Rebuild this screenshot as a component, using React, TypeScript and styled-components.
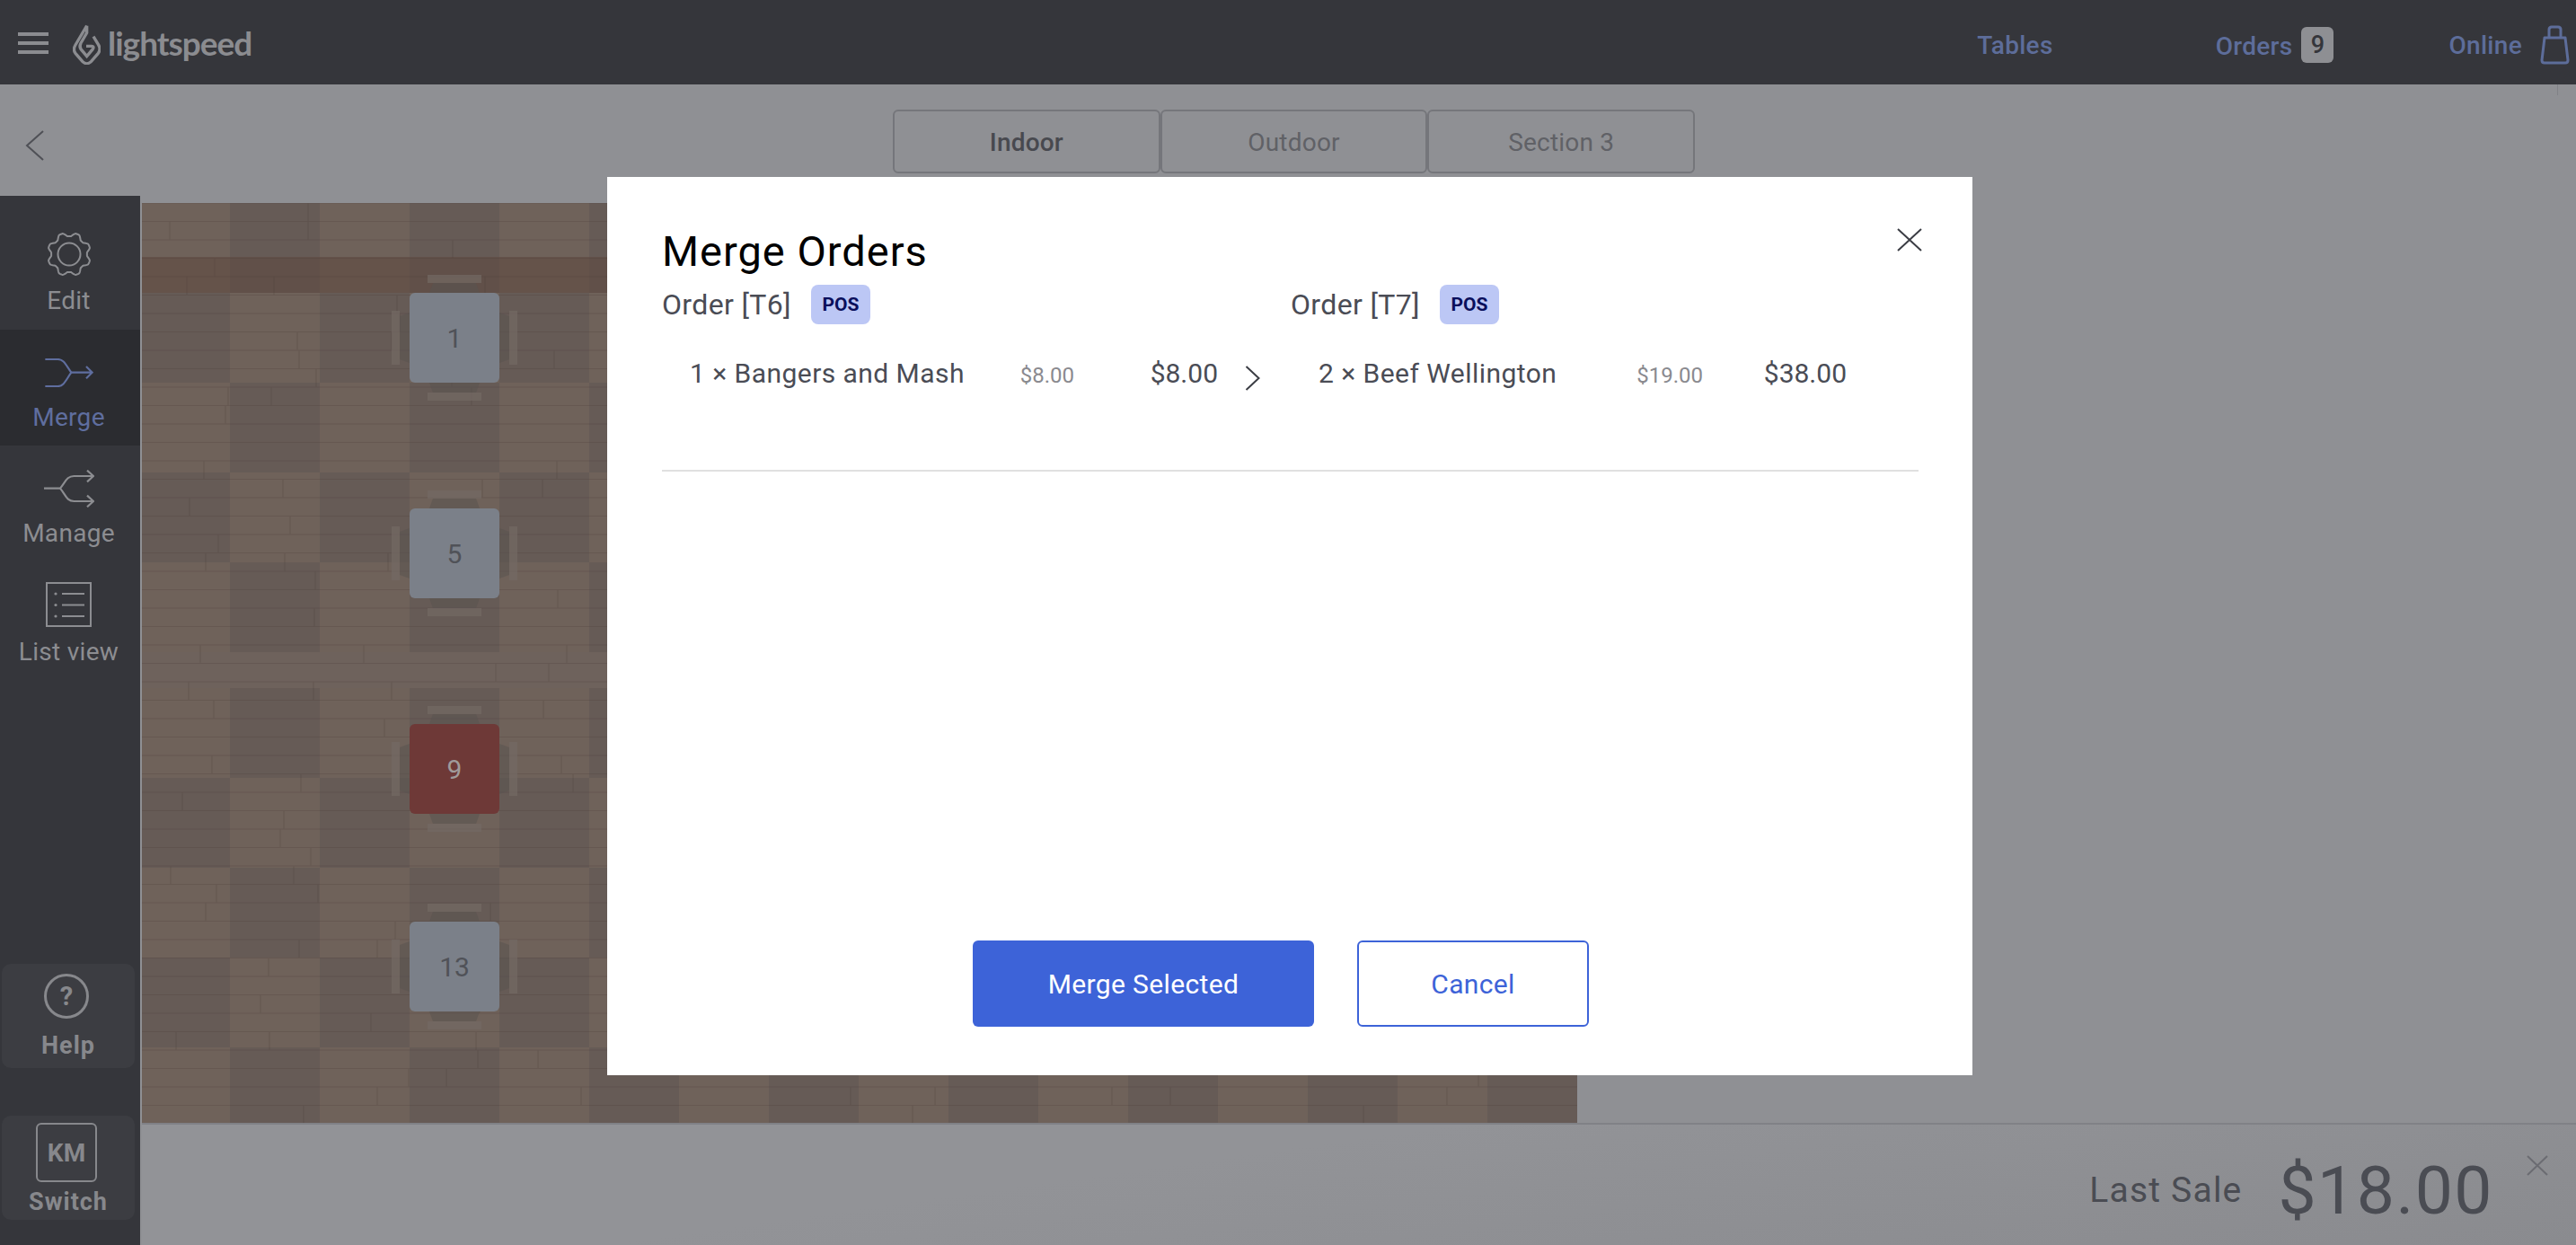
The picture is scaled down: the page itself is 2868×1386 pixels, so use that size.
import React from "react";
import styled, { createGlobalStyle } from "styled-components";

const GlobalStyle = createGlobalStyle`
  html, body {
    margin: 0;
    padding: 0;
    height: 100%;
    overflow: hidden;
    background: #8f9094;
  }
  #root { height: 100%; }
  * { box-sizing: border-box; }
`;

const FONT = `Roboto, "Liberation Sans", sans-serif`;
const COLS = 16;

// floor rows, in px from the top of the floor
const FLOOR_ROWS = [
  { y: 0, h: 100, light: true },
  { y: 100, h: 100, light: false },
  { y: 200, h: 100, light: true },
  { y: 300, h: 100, light: false },
  { y: 400, h: 100, light: true },
  { y: 540, h: 100, light: true },
  { y: 640, h: 100, light: false },
  { y: 740, h: 100, light: true },
  { y: 840, h: 100, light: false },
  { y: 940, h: 84, light: true },
];

const hash = (a: number, b: number) => {
  const v = Math.sin(a * 12.9898 + b * 78.233) * 43758.5453;
  return v - Math.floor(v);
};

const plankPath = () => {
  let d = "";
  for (let y = 0; y <= 1024; y += 20.5) {
    d += `M0 ${y}H1600`;
    for (let c = 0; c < COLS; c++) {
      const r = hash(c, y);
      if (r > 0.6) d += `M${c * 100 - 2 + Math.round(r * 170 - 70)} ${y}v20.5`;
    }
  }
  return d;
};

const FloorArt = () => (
  <FloorSvg viewBox="0 0 1598 1024">
    {FLOOR_ROWS.map((row) =>
      Array.from({ length: COLS }).map((_, c) => (
        <rect
          key={`${row.y}-${c}`}
          x={c * 100 - 2}
          y={row.y}
          width={100}
          height={row.h}
          fill={(c % 2 === 0) === row.light ? "#6f625a" : "#665b56"}
        />
      ))
    )}
    <rect x={0} y={60} width={1598} height={40} fill="#5f4c42" opacity={0.65} />
    <rect x={0} y={500} width={1598} height={40} fill="#6e625c" />
    <path d={plankPath()} stroke="#4a3d39" strokeOpacity={0.25} strokeWidth={1.2} fill="none" />
  </FloorSvg>
);

const gearPath = () => {
  const pts: string[] = [];
  for (let i = 0; i < 128; i++) {
    const t = (i / 128) * Math.PI * 2;
    const wave = Math.max(-0.75, Math.min(0.75, Math.cos(8 * t)));
    const r = 22 - 2.8 * wave;
    pts.push(`${(25 + r * Math.sin(t)).toFixed(2)} ${(25 - r * Math.cos(t)).toFixed(2)}`);
  }
  return `M${pts.join("L")}Z`;
};

const GearIcon = () => (
  <svg width="50" height="50" viewBox="0 0 50 50" fill="none" stroke="#8c8d91" strokeWidth="2">
    <path d={gearPath()} strokeLinejoin="round" />
    <circle cx="25" cy="25" r="12.5" />
  </svg>
);

const MergeIcon = () => (
  <svg width="54" height="32" viewBox="0 0 160 96" fill="none" stroke="#5f6e9f" strokeWidth="6.5">
    <path d="M0 3H42C62 3 68 20 87 47C68 74 62 93 42 93H0" />
    <path d="M87 47H156M137 27L157 47L137 67" />
  </svg>
);

const ManageIcon = () => (
  <svg width="56" height="42" viewBox="0 0 168 126" fill="none" stroke="#8c8d91" strokeWidth="6.5">
    <path d="M0 62H54C72 40 76 21 100 21H164M144 2L165 21L144 40" />
    <path d="M54 62C72 84 76 105 100 105H164M144 86L165 105L144 124" />
  </svg>
);

const ListIcon = () => (
  <svg width="51" height="50" viewBox="0 0 51 50" fill="none" stroke="#8c8d91" strokeWidth="2">
    <rect x="1" y="1" width="49" height="48" />
    <path d="M18 13H43M18 25.5H43M18 38H43" />
    <circle cx="11" cy="13" r="1.6" fill="#8c8d91" stroke="none" />
    <circle cx="11" cy="25.5" r="1.6" fill="#8c8d91" stroke="none" />
    <circle cx="11" cy="38" r="1.6" fill="#8c8d91" stroke="none" />
  </svg>
);

const LogoMark = () => (
  <svg width="31" height="46" viewBox="0 0 91 138" fill="none" stroke="#8b8c90" strokeWidth="10">
    <path d="M46 8L8 72C2 82 2 92 8 100L32 128C40 136 52 136 60 128L84 100C90 92 90 80 84 70L68 44" />
    <path d="M46 8V32L26 66C22 74 22 80 26 86L46 110L66 86C70 80 68 76 62 76H44" />
  </svg>
);

const BagIcon = () => (
  <svg width="33" height="44" viewBox="0 0 33 44" fill="none" stroke="#5d6d9a" strokeWidth="3">
    <path d="M5 14H28L31 39Q31 42 28 42H5Q2 42 2 39Z" strokeLinejoin="round" />
    <path d="M10 14V5Q10 2 13 2H20Q23 2 23 5V14" />
  </svg>
);

const Chair = ({ side }: { side: "top" | "bottom" | "left" | "right" }) => (
  <ChairBox $side={side}>
    <svg width="60" height="20" viewBox="0 0 60 20">
      <rect x="0" y="0" width="60" height="9" fill="#746a64" opacity="0.7" />
      <path d="M6 9H54L58 20H2Z" fill="#5a5350" opacity="0.55" />
    </svg>
  </ChairBox>
);

const tables = [
  { n: "1", y: 100 },
  { n: "5", y: 340 },
  { n: "9", y: 580, busy: true },
  { n: "13", y: 800 },
];

const OrderColumn = ({
  title,
  qty,
  unit,
  total,
  arrow,
}: {
  title: string;
  qty: string;
  unit: string;
  total: string;
  arrow?: boolean;
}) => (
  <div>
    <OrderHead>
      <OrderTitle>{title}</OrderTitle>
      <PosBadge>POS</PosBadge>
    </OrderHead>
    <OrderRow>
      <ItemName>{qty}</ItemName>
      <UnitPrice>{unit}</UnitPrice>
      <TotalPrice>{total}</TotalPrice>
      {arrow && (
        <MoveArrow width="17" height="28" viewBox="0 0 17 28" fill="none" stroke="#3b3d44" strokeWidth="2">
          <path d="M1.5 1L15.5 14L1.5 27" />
        </MoveArrow>
      )}
    </OrderRow>
  </div>
);

export default function App() {
  return (
    <Page>
      <GlobalStyle />
      <TopBar>
        <Burger>
          <span />
          <span />
          <span />
        </Burger>
        <LogoMark />
        <LogoText>lightspeed</LogoText>
        <TopNav>
          <NavLabel>Tables</NavLabel>
          <NavLabel $gap={181} $low>
            Orders
          </NavLabel>
          <CountBadge>9</CountBadge>
          <NavLabel $gap={128}>Online</NavLabel>
          <BagSlot>
            <BagIcon />
          </BagSlot>
        </TopNav>
      </TopBar>

      <SubBar>
        <BackButton width="21" height="34" viewBox="0 0 21 34" fill="none" stroke="#4f5056" strokeWidth="2">
          <path d="M20 1L2 17L20 33" />
        </BackButton>
        <Tabs>
          <Tab $active>Indoor</Tab>
          <Tab>Outdoor</Tab>
          <Tab>Section 3</Tab>
        </Tabs>
        <Tick />
      </SubBar>

      <Main>
        <Sidebar>
          <SideItem $first>
            <IconSlot>
              <GearIcon />
            </IconSlot>
            <SideLabel $gap={9}>Edit</SideLabel>
          </SideItem>
          <SideItem $active>
            <IconSlot>
              <MergeIcon />
            </IconSlot>
            <SideLabel $active>Merge</SideLabel>
          </SideItem>
          <SideItem>
            <IconSlot>
              <ManageIcon />
            </IconSlot>
            <SideLabel>Manage</SideLabel>
          </SideItem>
          <SideItem>
            <IconSlot>
              <ListIcon />
            </IconSlot>
            <SideLabel $gap={10}>List view</SideLabel>
          </SideItem>
          <SideCard $push>
            <HelpCircle>?</HelpCircle>
            <CardLabel>Help</CardLabel>
          </SideCard>
          <SideCard>
            <Initials>KM</Initials>
            <CardLabel>Switch</CardLabel>
          </SideCard>
        </Sidebar>

        <Content>
          <Floor>
            <FloorArt />
            {tables.map((t) => (
              <TableSpot key={t.n} $y={t.y}>
                <Chair side="top" />
                <Chair side="bottom" />
                <Chair side="left" />
                <Chair side="right" />
                <TableTop $busy={t.busy}>{t.n}</TableTop>
              </TableSpot>
            ))}
          </Floor>
          <SaleBar>
            <SaleLabel>Last Sale</SaleLabel>
            <SaleAmount>$18.00</SaleAmount>
            <SaleClose width="24" height="23" viewBox="0 0 24 23" fill="none" stroke="#6b6c72" strokeWidth="2">
              <path d="M1 1L23 22M23 1L1 22" />
            </SaleClose>
          </SaleBar>
        </Content>
      </Main>

      <Modal>
        <CloseIcon width="28" height="26" viewBox="0 0 28 26" fill="none" stroke="#3b3d44" strokeWidth="2">
          <path d="M1 1L27 25M27 1L1 25" />
        </CloseIcon>
        <ModalTitle>Merge Orders</ModalTitle>
        <OrderGrid>
          <OrderColumn title="Order [T6]" qty="1 × Bangers and Mash" unit="$8.00" total="$8.00" arrow />
          <OrderColumn title="Order [T7]" qty="2 × Beef Wellington" unit="$19.00" total="$38.00" />
        </OrderGrid>
        <ModalActions>
          <PrimaryButton>Merge Selected</PrimaryButton>
          <GhostButton>Cancel</GhostButton>
        </ModalActions>
      </Modal>
    </Page>
  );
}

const Page = styled.div`
  position: relative;
  width: 2868px;
  height: 1386px;
  display: flex;
  flex-direction: column;
  overflow: hidden;
  background: #8f9094;
  font-family: ${FONT};
`;

const TopBar = styled.header`
  height: 94px;
  flex: none;
  display: flex;
  align-items: center;
  padding: 4px 7px 0 20px;
  background: #35363b;
`;

const Burger = styled.div`
  width: 34px;
  height: 24px;
  margin: -2px 27px 0 0;
  display: flex;
  flex-direction: column;
  justify-content: space-between;
  span {
    height: 4px;
    background: #8b8c90;
  }
`;

const LogoText = styled.span`
  margin: -4px 0 0 8px;
  font-family: Lato, sans-serif;
  font-size: 37px;
  font-weight: 700;
  letter-spacing: -1px;
  color: #8b8c90;
`;

const TopNav = styled.nav`
  margin-left: auto;
  display: flex;
  align-items: center;
`;

const NavLabel = styled.span<{ $gap?: number; $low?: boolean }>`
  margin-left: ${(p) => p.$gap ?? 0}px;
  margin-top: ${(p) => (p.$low ? 4 : 2)}px;
  font-size: 28px;
  font-weight: 500;
  letter-spacing: 0.3px;
  color: #5d6d9a;
`;

const CountBadge = styled.span`
  width: 36px;
  height: 40px;
  margin: 2px 0 0 10px;
  display: flex;
  align-items: center;
  justify-content: center;
  border-radius: 6px;
  background: #8e8f93;
  color: #35363b;
  font-size: 27px;
  font-weight: 500;
`;

const BagSlot = styled.span`
  display: flex;
  margin: 2px 0 0 20px;
`;

const SubBar = styled.div`
  position: relative;
  height: 124px;
  flex: none;
  display: flex;
  align-items: flex-start;
  padding-left: 28px;
`;

const BackButton = styled.svg`
  margin-top: 51px;
`;

const Tabs = styled.div`
  width: 893px;
  height: 71px;
  margin: 28px 0 0 945px;
  display: flex;
`;

const Tab = styled.div<{ $active?: boolean }>`
  flex: 1;
  padding-top: 2px;
  display: flex;
  align-items: center;
  justify-content: center;
  border: 2px solid #75767b;
  border-radius: 6px;
  font-size: 28px;
  letter-spacing: 0.2px;
  font-weight: ${(p) => (p.$active ? 500 : 400)};
  color: ${(p) => (p.$active ? "#48494f" : "#606166")};
`;

const Tick = styled.div`
  position: absolute;
  top: 0;
  right: 20px;
  width: 1px;
  height: 12px;
  background: #808186;
`;

const Main = styled.div`
  flex: 1;
  min-height: 0;
  display: flex;
`;

const Sidebar = styled.aside`
  width: 156px;
  flex: none;
  display: flex;
  flex-direction: column;
  padding-bottom: 28px;
  background: #35363b;
`;

const SideItem = styled.div<{ $active?: boolean; $first?: boolean }>`
  height: 129px;
  flex: none;
  margin-top: ${(p) => (p.$first ? 20 : 0)}px;
  padding: ${(p) => (p.$first ? 20 : 23)}px 3px 0 0;
  display: flex;
  flex-direction: column;
  align-items: center;
  background: ${(p) => (p.$active ? "#2b2c30" : "transparent")};
`;

const IconSlot = styled.div`
  height: 50px;
  display: flex;
  align-items: center;
  justify-content: center;
`;

const SideLabel = styled.span<{ $active?: boolean; $gap?: number }>`
  margin-top: ${(p) => p.$gap ?? 7}px;
  line-height: 36px;
  font-size: 28px;
  letter-spacing: 0.3px;
  color: ${(p) => (p.$active ? "#5f6e9f" : "#8c8d91")};
`;

const SideCard = styled.div<{ $push?: boolean }>`
  width: 148px;
  height: 116px;
  flex: none;
  margin: ${(p) => (p.$push ? "auto" : "53px")} 0 0 2px;
  padding: 8px 4px 0 0;
  display: flex;
  flex-direction: column;
  align-items: center;
  border-radius: 10px;
  background: #3c3d42;
`;

const HelpCircle = styled.div`
  width: 50px;
  height: 50px;
  margin: 3px 0 8px;
  display: flex;
  align-items: center;
  justify-content: center;
  border: 3px solid #87888c;
  border-radius: 50%;
  color: #87888c;
  font-size: 29px;
  font-weight: 700;
`;

const Initials = styled.div`
  width: 68px;
  height: 66px;
  display: flex;
  align-items: center;
  justify-content: center;
  border: 2px solid #87888c;
  border-radius: 6px;
  color: #87888c;
  font-size: 28px;
  font-weight: 700;
`;

const CardLabel = styled.span`
  margin: 4px 0 0 4px;
  line-height: 36px;
  font-size: 27px;
  font-weight: 700;
  letter-spacing: 1px;
  color: #87888c;
`;

const Content = styled.div`
  flex: 1;
  min-width: 0;
  margin-left: 2px;
  padding-top: 8px;
  display: flex;
  flex-direction: column;
`;

const Floor = styled.div`
  position: relative;
  width: 1598px;
  height: 1024px;
  flex: none;
  overflow: hidden;
`;

const FloorSvg = styled.svg`
  display: block;
  width: 1598px;
  height: 1024px;
`;

const TableSpot = styled.div<{ $y: number }>`
  position: absolute;
  left: 298px;
  top: ${(p) => p.$y}px;
  width: 100px;
  height: 100px;
`;

const TableTop = styled.div<{ $busy?: boolean }>`
  position: relative;
  width: 100%;
  height: 100%;
  display: flex;
  align-items: center;
  justify-content: center;
  border-radius: 6px;
  background: ${(p) => (p.$busy ? "#6e3937" : "#7b8089")};
  color: ${(p) => (p.$busy ? "#a09b9b" : "#505258")};
  font-size: 30px;
`;

const chairPlace = {
  top: "top: -20px; left: 20px;",
  bottom: "bottom: -20px; left: 20px; transform: rotate(180deg);",
  left: "top: 40px; left: -40px; transform: rotate(-90deg);",
  right: "top: 40px; right: -40px; transform: rotate(90deg);",
};

const ChairBox = styled.div<{ $side: "top" | "bottom" | "left" | "right" }>`
  position: absolute;
  width: 60px;
  height: 20px;
  ${(p) => chairPlace[p.$side]}
  svg {
    display: block;
  }
`;

const SaleBar = styled.div`
  flex: 1;
  min-height: 0;
  display: flex;
  justify-content: flex-end;
  align-items: center;
  padding: 12px 31px 0 0;
  border-top: 2px solid #808186;
  background: linear-gradient(172deg, #929397 40%, #8a8b8f 100%);
  color: #4a4c53;
`;

const SaleLabel = styled.span`
  font-size: 39px;
  letter-spacing: 1.2px;
`;

const SaleAmount = styled.span`
  margin-left: 40px;
  font-size: 75px;
  letter-spacing: 1.5px;
`;

const SaleClose = styled.svg`
  align-self: flex-start;
  margin: 22px 0 0 37px;
`;

const Modal = styled.section`
  position: absolute;
  left: 676px;
  top: 197px;
  width: 1520px;
  height: 1000px;
  padding: 55px 60px 54px 61px;
  display: flex;
  flex-direction: column;
  background: #fff;
`;

const CloseIcon = styled.svg`
  position: absolute;
  top: 57px;
  right: 56px;
`;

const ModalTitle = styled.h2`
  margin: 0;
  line-height: 56px;
  font-size: 47px;
  font-weight: 400;
  letter-spacing: 1px;
  color: #000;
`;

const OrderGrid = styled.div`
  height: 208px;
  margin-top: 9px;
  display: grid;
  grid-template-columns: 700px 700px;
  border-bottom: 2px solid #e0e0e0;
`;

const OrderHead = styled.div`
  height: 44px;
  display: flex;
  align-items: center;
`;

const OrderTitle = styled.span`
  font-size: 32px;
  letter-spacing: 0.35px;
  color: #4a4c55;
`;

const PosBadge = styled.span`
  width: 66px;
  height: 44px;
  margin-left: 22px;
  display: flex;
  align-items: center;
  justify-content: center;
  border-radius: 8px;
  background: #bcc7f5;
  color: #0a0f5c;
  font-size: 21px;
  font-weight: 700;
`;

const OrderRow = styled.div`
  position: relative;
  width: 619px;
  height: 60px;
  margin-top: 24px;
  padding-left: 31px;
  display: grid;
  grid-template-columns: 1fr 88px 160px;
  align-items: center;
  color: #4a4c55;
`;

const ItemName = styled.span`
  font-size: 30px;
  letter-spacing: 0.45px;
  white-space: nowrap;
`;

const UnitPrice = styled.span`
  justify-self: end;
  padding-top: 5px;
  font-size: 24px;
  color: #8a8a8f;
`;

const TotalPrice = styled.span`
  justify-self: end;
  font-size: 30px;
`;

const MoveArrow = styled.svg`
  position: absolute;
  left: 649px;
  top: 22px;
`;

const ModalActions = styled.div`
  margin-top: auto;
  padding-right: 21px;
  display: flex;
  justify-content: center;
  gap: 48px;
`;

const PrimaryButton = styled.button`
  width: 380px;
  height: 96px;
  border: none;
  border-radius: 6px;
  background: #3d63d8;
  color: #fff;
  font-family: ${FONT};
  font-size: 30px;
  letter-spacing: 0.35px;
`;

const GhostButton = styled.button`
  width: 258px;
  height: 96px;
  border: 2px solid #3d63d8;
  border-radius: 6px;
  background: #fff;
  color: #3d63d8;
  font-family: ${FONT};
  font-size: 30px;
  letter-spacing: 0.35px;
`;
